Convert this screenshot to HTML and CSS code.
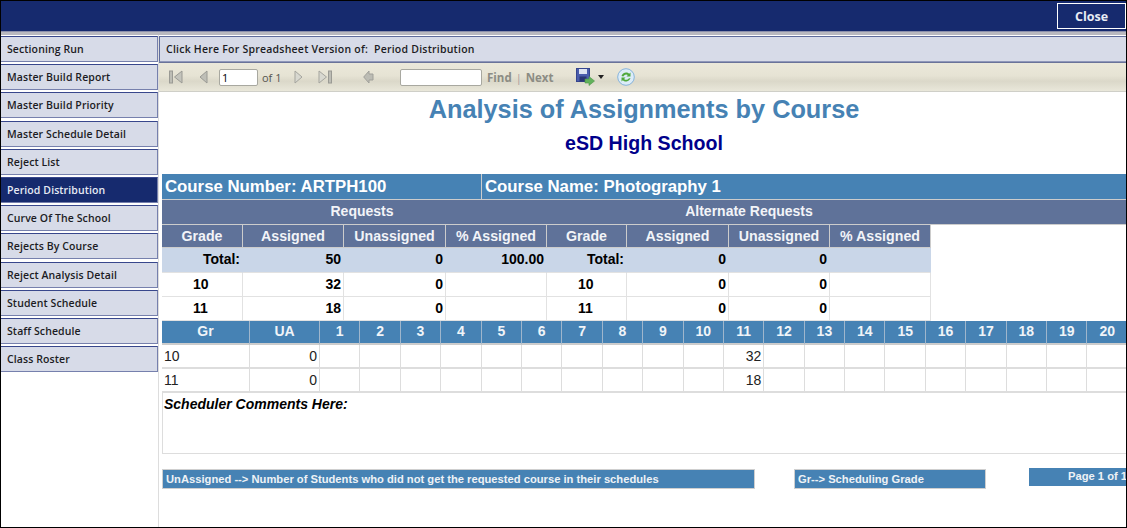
FILE: index.html
```html
<!DOCTYPE html>
<html lang="en">
<head>
  <meta charset="UTF-8" />
  <title>Period Distribution</title>
  <link rel="stylesheet" href="styles.css">
</head>
<body>
  <div class="page">
    <header class="topbar">
      <button class="close-btn">Close</button>
    </header>
    <div class="strip"></div>
    <div class="layout">
      <nav class="sidebar">
        <a class="nav-item">Sectioning Run</a>
        <a class="nav-item">Master Build Report</a>
        <a class="nav-item">Master Build Priority</a>
        <a class="nav-item">Master Schedule Detail</a>
        <a class="nav-item">Reject List</a>
        <a class="nav-item active">Period Distribution</a>
        <a class="nav-item">Curve Of The School</a>
        <a class="nav-item">Rejects By Course</a>
        <a class="nav-item">Reject Analysis Detail</a>
        <a class="nav-item">Student Schedule</a>
        <a class="nav-item">Staff Schedule</a>
        <a class="nav-item">Class Roster</a>
      </nav>

      <main class="main">
        <div class="spreadsheet-link">Click Here For Spreadsheet Version of:&nbsp; Period Distribution</div>

        <div class="toolbar">
          <svg class="tool first" width="14" height="16" viewBox="0 0 14 16"><rect x="0.5" y="2" width="3" height="12" fill="#bdbdb5" stroke="#9a9a94"/><path d="M13 2v12L5.500 8z" fill="#c4c4bc" stroke="#9a9a94"/></svg>
          <svg class="tool prev" width="9" height="16" viewBox="0 0 9 16"><path d="M8 2v12L1 8z" fill="#bfbfb7" stroke="#9a9a94"/></svg>
          <input class="page-input" type="text" value="1">
          <span class="of-text">of 1</span>
          <svg class="tool next" width="9" height="16" viewBox="0 0 9 16"><path d="M1 2v12l7-6z" fill="#d8d8d0" stroke="#a5a59e"/></svg>
          <svg class="tool last" width="14" height="16" viewBox="0 0 14 16"><path d="M1 2v12l7.500-6z" fill="#d8d8d0" stroke="#a5a59e"/><rect x="10.500" y="2" width="3" height="12" fill="#bdbdb5" stroke="#9a9a94"/></svg>
          <svg class="tool back" width="11" height="14" viewBox="0 0 11 14"><path d="M6 1v3h4v6H6v3L0.700 7z" fill="#bcbcb4" stroke="#a0a09a"/></svg>
          <input class="find-input" type="text">
          <span class="find-text">Find</span>
          <span class="find-sep">|</span>
          <span class="find-text">Next</span>
          <svg class="tool save" width="19" height="18" viewBox="0 0 19 18">
            <rect x="0.500" y="0.500" width="13" height="13" fill="#4a5cac" stroke="#35458e"/>
            <rect x="3" y="1" width="8" height="5" fill="#dfe4f2"/>
            <rect x="3.500" y="8.500" width="7" height="5" fill="#2a3674"/>
            <path d="M9 11h4V8.500L18.500 13 13 17.500V15H9z" fill="#62b25c" stroke="#4a9446" stroke-width="0.600"/>
          </svg>
          <span class="caret"></span>
          <svg class="tool refresh" width="18" height="18" viewBox="0 0 18 18">
            <circle cx="9" cy="9" r="8.300" fill="#dcecf8" stroke="#86b4dc"/>
            <path d="M4.500 8a4.700 4.700 0 0 1 7.700-2.300L13.500 4.500v4h-4l1.400-1.400A3 3 0 0 0 6.300 8.500z" fill="#4fa83c"/>
            <path d="M13.500 10a4.700 4.700 0 0 1-7.700 2.300L4.500 13.500v-4h4L7.100 10.900a3 3 0 0 0 4.600-.4z" fill="#4fa83c"/>
          </svg>
        </div>

        <section class="report">
          <h1 class="report-title">Analysis of Assignments by Course</h1>
          <h2 class="report-school">eSD High School</h2>

          <div class="course-row">
            <div class="course-number">Course Number: ARTPH100</div>
            <div class="course-name">Course Name: Photography 1</div>
          </div>
          <div class="band-row">
            <div class="band-requests">Requests</div>
            <div class="band-alternate">Alternate Requests</div>
          </div>

          <table class="summary">
            <colgroup>
              <col class="c81"><col class="c101"><col class="c102"><col class="c101">
              <col class="c80"><col class="c102"><col class="c101"><col class="c101">
            </colgroup>
            <tr class="summary-head">
              <th>Grade</th><th>Assigned</th><th>Unassigned</th><th>% Assigned</th>
              <th>Grade</th><th>Assigned</th><th>Unassigned</th><th>% Assigned</th>
            </tr>
            <tr class="total">
              <td>Total:</td><td>50</td><td>0</td><td>100.00</td>
              <td>Total:</td><td>0</td><td>0</td><td></td>
            </tr>
            <tr>
              <td class="grade">10</td><td>32</td><td>0</td><td></td>
              <td class="grade">10</td><td>0</td><td>0</td><td></td>
            </tr>
            <tr>
              <td class="grade">11</td><td>18</td><td>0</td><td></td>
              <td class="grade">11</td><td>0</td><td>0</td><td></td>
            </tr>
          </table>

          <table class="dist">
            <colgroup>
              <col class="c-gr"><col class="c-ua">
              <col span="20" class="c-period">
            </colgroup>
            <tr class="dist-head">
              <th>Gr</th><th>UA</th>
              <th>1</th><th>2</th><th>3</th><th>4</th><th>5</th><th>6</th><th>7</th><th>8</th><th>9</th><th>10</th>
              <th>11</th><th>12</th><th>13</th><th>14</th><th>15</th><th>16</th><th>17</th><th>18</th><th>19</th><th>20</th>
            </tr>
            <tr>
              <td class="left">10</td><td>0</td>
              <td></td><td></td><td></td><td></td><td></td><td></td><td></td><td></td><td></td><td></td>
              <td>32</td><td></td><td></td><td></td><td></td><td></td><td></td><td></td><td></td><td></td>
            </tr>
            <tr>
              <td class="left">11</td><td>0</td>
              <td></td><td></td><td></td><td></td><td></td><td></td><td></td><td></td><td></td><td></td>
              <td>18</td><td></td><td></td><td></td><td></td><td></td><td></td><td></td><td></td><td></td>
            </tr>
          </table>

          <div class="comments">Scheduler Comments Here:</div>

          <div class="legend-row">
            <div class="legend legend-wide">UnAssigned --&gt; Number of Students who did not get the requested course in their schedules</div>
            <div class="legend legend-grade">Gr--&gt; Scheduling Grade</div>
            <div class="page-count">Page 1 of 1</div>
          </div>
        </section>
      </main>
    </div>
  </div>
</body>
</html>
```

FILE: styles.css
```css
html, body {
  margin: 0;
  height: 100%;
  overflow: hidden;
  background: #fff;
}
.page {
  box-sizing: border-box;
  width: 1127px;
  height: 528px;
  border: 1px solid #000;
  display: flex;
  flex-direction: column;
  overflow: hidden;
  font-family: "Liberation Sans", Arial, sans-serif;
}
.topbar {
  flex: none;
  height: 30px;
  background: #162a6e;
  display: flex;
  justify-content: flex-end;
  align-items: center;
}
.close-btn {
  box-sizing: border-box;
  width: 69px;
  height: 26px;
  background: #162a6e;
  border: 1px solid #fff;
  color: #e8ecf4;
  font-family: "Open Sans", sans-serif;
  font-size: 12.500px;
  font-weight: 700;
  padding: 0;
}
.strip {
  flex: none;
  height: 4px;
  background: #b9b9c0;
  border-top: 1px solid #8c90ac;
  box-sizing: border-box;
}
.layout {
  flex: 1;
  display: flex;
  min-height: 0;
}
.sidebar {
  flex: none;
  box-sizing: border-box;
  width: 158px;
  padding-top: 1px;
  border-right: 1px solid #ddd;
  display: flex;
  flex-direction: column;
  gap: 2.2px;
}
.nav-item {
  box-sizing: border-box;
  width: 157px;
  height: 26px;
  padding-left: 6px;
  display: flex;
  align-items: center;
  background: #d7dbe8;
  border: 1px solid #7680ad;
  border-left: 0;
  border-top-color: #38478c;
  color: #1c1c24;
  font-family: "Open Sans", sans-serif;
  font-size: 10.500px;
  font-weight: 600;
  letter-spacing: 0.1px;
  white-space: nowrap;
}
.nav-item.active {
  background: #162a6e;
  color: #e6eaf4;
}
.main {
  flex: 1;
  min-width: 0;
  overflow: hidden;
}
.spreadsheet-link {
  box-sizing: border-box;
  height: 26px;
  margin-top: 1px;
  padding-left: 6px;
  display: flex;
  align-items: center;
  background: #d7dbe8;
  border-top: 1px solid #5f6c9c;
  border-left: 1px solid #5f6c9c;
  border-bottom: 1px solid #8f97ba;
  color: #1c1c24;
  font-family: "Open Sans", sans-serif;
  font-size: 10.500px;
  font-weight: 600;
  letter-spacing: 0.23px;
}
.toolbar {
  box-sizing: border-box;
  height: 30px;
  display: flex;
  align-items: center;
  background: linear-gradient(#ebe8da, #e6e3d4 45%, #dbd8c9 65%, #e9e7da);
  border-top: 1px solid #6a7399;
  border-bottom: 1px solid #cfcfc8;
  color: #55554f;
  font-family: "Open Sans", sans-serif;
  font-size: 11px;
}
.tool {
  flex: none;
  display: block;
}
.first { margin-left: 10px; }
.prev { margin-left: 16px; }
.page-input {
  box-sizing: border-box;
  width: 39px;
  height: 17px;
  margin: 0 0 0 11px;
  padding: 0 2px;
  border: 1px solid #a8a8a0;
  border-radius: 2px;
  background: #fff;
  font-family: "Open Sans", sans-serif;
  font-size: 11px;
}
.of-text { margin-left: 4px; width: 22px; }
.next { margin-left: 10px; }
.last { margin-left: 15px; }
.back { margin-left: 31px; }
.find-input {
  box-sizing: border-box;
  width: 82px;
  height: 17px;
  margin: 0 0 0 26px;
  padding: 0;
  border: 1px solid #a8a8a0;
  border-radius: 2px;
  background: #fff;
}
.find-text {
  font-weight: 700;
  font-size: 11.500px;
  color: #8c8c84;
}
.find-input + .find-text { margin-left: 5px; }
.find-sep { margin: 0 4px; color: #a89a9a; font-size: 11px; }
.save { margin-left: 22px; }
.caret {
  margin-left: 3px;
  width: 0;
  height: 0;
  border-left: 3px solid transparent;
  border-right: 3px solid transparent;
  border-top: 4px solid #222;
}
.refresh { margin-left: 13px; }

.report {
  padding: 0 0 0 3px;
  width: 1000px;
}
.report-title {
  margin: 0;
  width: 964px;
  height: 36px;
  line-height: 34px;
  text-align: center;
  font-size: 25.300px;
  font-weight: 700;
  color: #4682b4;
}
.report-school {
  margin: 0;
  width: 964px;
  height: 46px;
  line-height: 26px;
  padding-top: 2px;
  box-sizing: border-box;
  text-align: center;
  font-size: 19.600px;
  font-weight: 700;
  color: #00008b;
}
.course-row {
  display: flex;
  width: 965px;
  height: 26px;
  background: #4682b4;
  color: #fff;
  font-size: 16.800px;
  font-weight: 700;
  line-height: 25px;
  border-bottom: 1px solid #ccc;
  box-sizing: border-box;
}
.course-number {
  box-sizing: border-box;
  width: 320px;
  padding-left: 3px;
  border-right: 1px solid #ccc;
}
.course-name { padding-left: 3px; }
.band-row {
  display: flex;
  width: 965px;
  height: 25px;
  background: #5f7299;
  color: #f2f4f8;
  font-size: 14px;
  font-weight: 700;
  line-height: 23px;
  text-align: center;
  border-bottom: 1px solid #ccc;
  box-sizing: border-box;
}
.band-requests { width: 400px; }
.band-alternate { width: 374px; }

table {
  border-collapse: separate;
  border-spacing: 0;
  table-layout: fixed;
}
.summary { width: 769px; }
.c80 { width: 80px; }
.c81 { width: 81px; }
.c101 { width: 101px; }
.c102 { width: 102px; }
.summary th, .summary td {
  box-sizing: border-box;
  padding: 0 2px 2px 0;
  border-right: 1px solid #e2e2e2;
  border-bottom: 1px solid #e2e2e2;
  font-size: 14px;
  font-weight: 700;
  color: #000;
  text-align: right;
  height: 24px;
}
.summary-head th {
  height: 23px;
  padding: 0 0 1px;
  background: #5f7299;
  color: #f2f4f8;
  text-align: center;
  font-size: 14.200px;
  border-right-color: #ccc;
  border-bottom-color: #ccc;
}
.summary .total td {
  height: 25px;
  background: #c9d6e8;
  border-color: #c9d6e8;
  border-bottom-color: #e2e2e2;
}
.summary td.grade {
  text-align: left;
  padding-left: 31px;
}
.dist {
  width: 966px;
}
.c-gr { width: 88px; }
.c-ua { width: 70px; }
.c-period { width: 40.400px; }
.dist th, .dist td {
  box-sizing: border-box;
  padding: 0 2px 0 0;
  border-right: 1px solid #ddd;
  border-bottom: 2px solid #ddd;
  height: 24px;
  font-size: 14px;
  color: #222;
  text-align: right;
  font-weight: 400;
}
.dist-head th {
  padding: 0 0 2px;
  background: #4682b4;
  color: #f0f4f8;
  text-align: center;
  font-weight: 700;
  border-right-color: #9fb6cc;
  border-bottom-color: #ccc;
}
.dist td.left {
  text-align: left;
  padding-left: 2px;
}
.comments {
  box-sizing: border-box;
  width: 1000px;
  height: 61px;
  padding: 3px 0 0 1px;
  border-left: 1px solid #ddd;
  border-bottom: 1px solid #ddd;
  font-size: 14px;
  font-weight: 700;
  font-style: italic;
  color: #000;
}
.legend-row {
  display: flex;
  align-items: flex-start;
  margin-top: 15px;
  width: 1000px;
  color: #eef2f6;
  font-size: 11.200px;
  font-weight: 700;
}
.legend {
  box-sizing: border-box;
  height: 20px;
  line-height: 18px;
  padding-left: 3px;
  background: #4682b4;
  border: 1px solid #cfcfcf;
  white-space: nowrap;
}
.legend-wide { width: 593px; }
.legend-grade { width: 192px; margin-left: 39px; }
.page-count {
  flex: none;
  box-sizing: border-box;
  width: 110px;
  height: 18px;
  margin: -1px 0 0 43px;
  padding-left: 39px;
  line-height: 16px;
  background: #4682b4;
  white-space: nowrap;
}
```
